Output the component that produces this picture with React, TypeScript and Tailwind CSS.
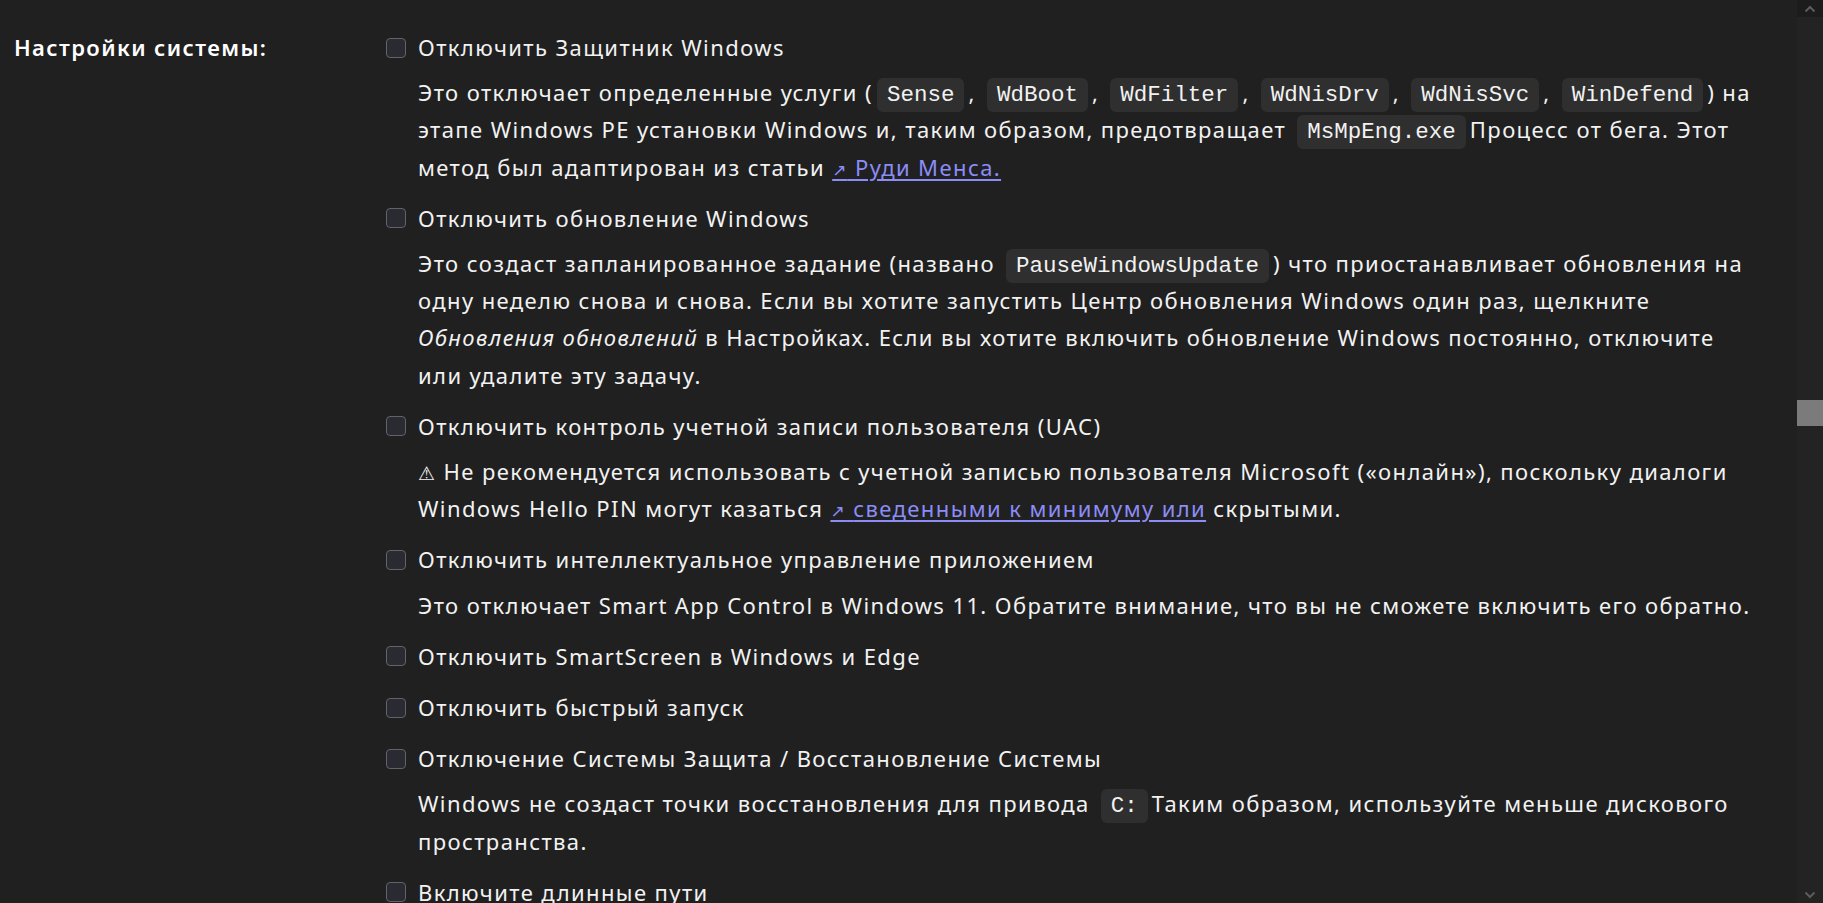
import React from 'react';

// one option row: checkbox + label, optional description below
interface OptionProps {
  label: string;
  children?: React.ReactNode;
}

const Code: React.FC<{ children: React.ReactNode }> = ({ children }) => (
  <code className="mx-[4px] rounded-md bg-[#2f2f2f] px-[10px] py-[4px] font-['Liberation_Mono',monospace] text-[22.5px] leading-none tracking-normal text-[#f2f2f2]">
    {children}
  </code>
);

const Ext: React.FC<{ children: React.ReactNode }> = ({ children }) => (
  <a className="text-[#8b8cf6] underline underline-offset-[3px]" href="#">
    <span className="font-['DejaVu_Sans',sans-serif] text-[17px] leading-none">↗</span> {children}
  </a>
);

const Option: React.FC<OptionProps> = ({ label, children }) => (
  <div>
    <label className="flex items-center gap-3">
      <span className="h-5 w-5 shrink-0 rounded-[4px] border-[1.5px] border-[#626268] bg-[#2a2a33]" />
      <span>{label}</span>
    </label>
    {children && <p className="mt-2 pl-8">{children}</p>}
  </div>
);

export default function App() {
  return (
    <div className="flex h-[903px] w-full overflow-hidden bg-[#202020] font-['Noto_Sans',sans-serif] text-[22px] leading-[37.2px] tracking-[1.4px] text-[#f2f2f2]">
      <main className="flex min-w-0 flex-1 pl-[14px] pt-[29px]">
        <div className="w-[372px] shrink-0 font-semibold text-white">Настройки системы:</div>

        <div className="flex w-[1376px] shrink-0 flex-col gap-[14px]">
          <Option label="Отключить Защитник Windows">
            Это отключает определенные услуги (<Code>Sense</Code>, <Code>WdBoot</Code>, <Code>WdFilter</Code>,{' '}
            <Code>WdNisDrv</Code>, <Code>WdNisSvc</Code>, <Code>WinDefend</Code>) на этапе Windows PE установки
            Windows и, таким образом, предотвращает <Code>MsMpEng.exe</Code>Процесс от бега. Этот метод был
            адаптирован из статьи <Ext>Руди Менса.</Ext>
          </Option>

          <Option label="Отключить обновление Windows">
            Это создаст запланированное задание (названо <Code>PauseWindowsUpdate</Code>) что приостанавливает
            обновления на одну неделю снова и снова. Если вы хотите запустить Центр обновления Windows один раз,
            щелкните <em>Обновления{'\u00A0'}обновлений</em> в Настройках. Если вы хотите включить обновление Windows
            постоянно, отключите или удалите эту задачу.
          </Option>

          <Option label="Отключить контроль учетной записи пользователя (UAC)">
            <span className="font-['DejaVu_Sans',sans-serif] text-[19px] leading-none">⚠{'\uFE0E'}</span> Не
            рекомендуется использовать с учетной записью пользователя Microsoft («онлайн»), поскольку диалоги Windows
            Hello PIN могут казаться <Ext>сведенными к минимуму или</Ext> скрытыми.
          </Option>

          <Option label="Отключить интеллектуальное управление приложением">
            Это отключает Smart App Control в Windows 11. Обратите внимание, что вы не сможете включить его обратно.
          </Option>

          <Option label="Отключить SmartScreen в Windows и Edge" />
          <Option label="Отключить быстрый запуск" />

          <Option label="Отключение Системы Защита / Восстановление Системы">
            Windows не создаст точки восстановления для привода <Code>C:</Code>Таким образом, используйте меньше
            дискового пространства.
          </Option>

          <Option label="Включите длинные пути" />
        </div>
      </main>

      {/* fake scrollbar */}
      <div className="flex w-[26px] shrink-0 flex-col bg-[#232323]">
        <div className="flex h-[17px] items-center justify-center bg-[#1c1c1c] text-[#5c5c5c]">
          <svg width="12" height="8" viewBox="0 0 12 8" fill="none">
            <path d="M1.5 6.5 6 2l4.5 4.5" stroke="currentColor" strokeWidth="2" />
          </svg>
        </div>
        <div className="flex-1">
          <div className="mt-[383px] h-[26px] bg-[#7b7b7b]" />
        </div>
        <div className="flex h-[17px] items-center justify-center text-[#5c5c5c]">
          <svg width="12" height="8" viewBox="0 0 12 8" fill="none">
            <path d="M1.5 1.5 6 6l4.5-4.5" stroke="currentColor" strokeWidth="2" />
          </svg>
        </div>
      </div>
    </div>
  );
}
